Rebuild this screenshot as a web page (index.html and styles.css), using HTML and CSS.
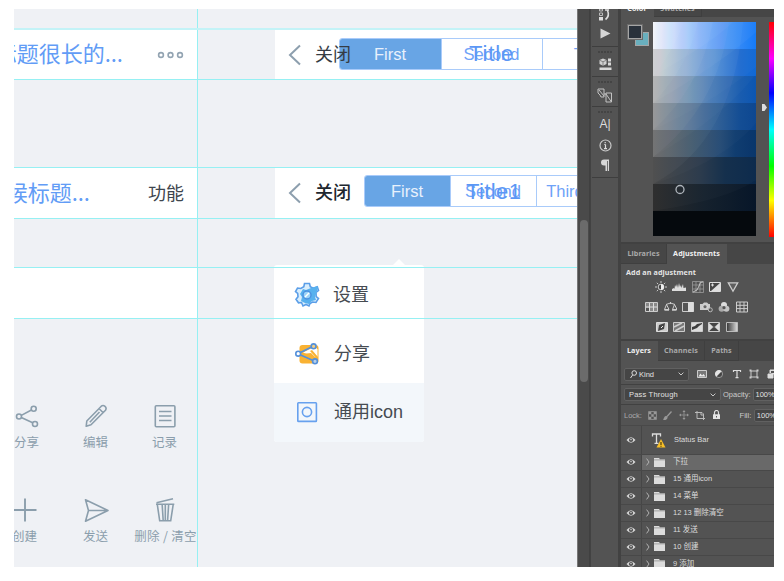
FILE: index.html
```
<!DOCTYPE html>
<html lang="en">
<head>
<meta charset="utf-8">
<title>Design workspace</title>
<link rel="stylesheet" href="styles.css">
</head>
<body>
<svg width="0" height="0" class="defs">
  <defs>
    <symbol id="back" viewBox="0 0 14 22"><path d="M12 1.500 2 11l10 9.500" fill="none" stroke="#8d9fae" stroke-width="2"/></symbol>
    <symbol id="share" viewBox="0 0 24 24"><g fill="none" stroke="currentColor" stroke-width="1.600"><circle cx="4" cy="12.500" r="2.500"/><circle cx="18.700" cy="4.800" r="2.500"/><circle cx="20" cy="20" r="2.500"/><path d="M6.300 11.400 16.400 6M6.300 13.600l11.400 5.200"/></g></symbol>
    <symbol id="eye" viewBox="0 0 10 8"><path d="M.5 4Q5-1.500 9.500 4 5 9.500.5 4Z" fill="#d8d8d8"/><circle cx="5" cy="4" r="2.100" fill="#4e4e4e"/><circle cx="5" cy="3.600" r=".8" fill="#ccc"/></symbol>
    <symbol id="folder" viewBox="0 0 11 9"><path d="M0 0h5l1 1.300h5V9H0Z" fill="#dcdcdc"/><path d="M0 1.900h11" stroke="#777" stroke-width=".6"/></symbol>
    <symbol id="chev" viewBox="0 0 6 4"><path d="m.6.600 2.400 2.400L5.400.600" fill="none" stroke="#c8c8c8"/></symbol>
    <symbol id="twist" viewBox="0 0 4 8"><path d="m.6.600 2.400 3.400L.6 7.400" fill="none" stroke="#bbb" stroke-width=".9"/></symbol>
  </defs>
</svg>
<div class="app">
  <main class="canvas">
    <section class="board bar left-a"><span class="title">标题很长的...</span><svg class="dots" width="28" height="8" fill="none" stroke="#93a4b2" stroke-width="1.600"><circle cx="4" cy="4" r="2.400"/><circle cx="13.500" cy="4" r="2.400"/><circle cx="23" cy="4" r="2.400"/></svg></section>
    <section class="board bar left-b"><span class="title">候标题...</span><span class="action">功能</span></section>
    <section class="board left-c"></section>

    <section class="board bar nav nav-a">
      <svg class="back" width="14" height="22"><use href="#back"/></svg>
      <div class="seg"><span class="on">First</span><span>Second</span><span>Third</span></div>
      <span class="close">关闭</span><span class="over">Title</span>
    </section>
    <section class="board bar nav nav-b">
      <svg class="back" width="14" height="22"><use href="#back"/></svg>
      <div class="seg"><span class="on">First</span><span>Second</span><span class="third">Third</span></div>
      <span class="close">关闭</span><span class="over">Title1</span>
    </section>

    <section class="menu">
      <div class="item">
        <svg width="26" height="26" viewBox="0 0 26 26"><path d="M10.500 1.500h5l.8 3.200 3 1.600 4-1.600 1.200 3.800-2.500 2 .2 4 2.300 2-2.500 4-3.500-.5-2.500 1.500-1 2.500-3-1.500-3 1.500-1.500-3.500-3 .3-2.500-3.500 2-2.500-.3-3.300L1.500 9.500l2-3.500 3.300.500 3-1.800Z" fill="#d9eefc" stroke="#5b9ee8" stroke-width="1.600"/><path d="m9 7 3 1 5-2 7-2-1 5-2 6 1 3-4 1-3 3-4-1-4-2 1-4-2-3Z" fill="#58b1ee"/><circle cx="13" cy="13" r="4" fill="#9bd4f8" stroke="#4a90e0" stroke-width="1.400"/><path d="m11 15 4-4" stroke="#fff" stroke-width="1.500"/></svg>
        <span>设置</span></div>
      <div class="item">
        <svg width="26" height="26" viewBox="0 0 26 26"><rect x="5.500" y="4" width="19" height="18.500" rx="3" fill="#f9b233"/><path d="M9 11.500 18 7h4.500l1 1.500V17Z" fill="#fff"/><path d="m8 13 9-1 6 6v3Zm8-3 2-1 6 7v3Z" fill="#f9b233"/><g fill="#fff" stroke="#5490da" stroke-width="1.600"><path d="M6 11.800 17.500 6M6 13.800l12.500 5.500" fill="none"/><circle cx="4.200" cy="12.700" r="2.400"/><circle cx="19.600" cy="5.300" r="2.400" fill="#f3cf85"/><circle cx="21" cy="20.300" r="2.400" fill="#b8cfe8"/></g></svg>
        <span>分享</span></div>
      <div class="item hover">
        <svg width="26" height="26" viewBox="0 0 26 26" fill="none" stroke="#67a1ee" stroke-width="1.600"><rect x="3.800" y="2.800" width="18.600" height="18.600" rx=".7"/><circle cx="13" cy="12" r="4.600"/></svg>
        <span>通用icon</span></div>
      <svg class="caret" width="14" height="7"><path d="M0 7 7 0l7 7Z" fill="#fff"/></svg>
    </section>

    <section class="icons">
      <div class="cell"><svg width="24" height="24"><use href="#share"/></svg><span>分享</span></div>
      <div class="cell"><svg width="24" height="24" viewBox="0 0 24 24" fill="none" stroke="currentColor" stroke-width="1.600" stroke-linejoin="round"><path d="M2.200 22.300 2.800 17 17.300 2.200q1.800-1.500 3.700.2t.5 3.800L7 20.800Zm13-17.600 4 4M5.800 18.200 15.500 8"/></svg><span>编辑</span></div>
      <div class="cell"><svg width="24" height="24" viewBox="0 0 24 24" fill="none" stroke="currentColor" stroke-width="1.600"><rect x="2.300" y="1.800" width="19.600" height="21" rx="1"/><path d="M6 7.500h12.500M6 12h12.500M6 16.500h12.500"/></svg><span>记录</span></div>
      <div class="cell"><svg class="plus" width="24" height="24" viewBox="0 0 24 24" stroke="currentColor" stroke-width="1.900"><path d="M12 .5v23M.5 12h23"/></svg><span class="create">创建</span></div>
      <div class="cell"><svg width="26" height="24" viewBox="0 0 26 24" fill="none" stroke="currentColor" stroke-width="1.600" stroke-linejoin="round"><path d="M2.500 1.800 25 12.500 2.500 23.200 5.500 12.500ZM5.500 12.500H25"/></svg><span>发送</span></div>
      <div class="cell"><svg width="24" height="24" viewBox="0 0 24 24" fill="none" stroke="currentColor" stroke-width="1.600"><path d="M3 6.300h18.300M3.500 4.800 20 .8M4.300 6.500l2.400 16.300h11L20.200 6.500M9.200 7l1 15.500M12.300 7v15.500M15.600 7l-1 15.500"/></svg><span class="wide">删除 / 清空</span></div>
    </section>

    <i class="guide v"></i>
    <i class="guide g1"></i><i class="guide g2"></i><i class="guide g3"></i><i class="guide g4"></i><i class="guide g5"></i><i class="guide g6"></i>
  </main>

  <div class="gutter"><i class="thumb"></i></div>

  <nav class="rail">
    <div class="group first">
      <svg width="14" height="12" viewBox="0 0 14 12"><path d="M1.500 0h3v2h-3zM1.500 4h3v2.500h-3z" fill="none" stroke="#bbb"/><path d="M1 8h4v3.500H1z" fill="#ddd"/><path d="M7 1h4M7.500 10.500Q12 7 9.500 1.500" fill="none" stroke="#ddd" stroke-width="1.600"/></svg>
      <svg class="play" width="11" height="11" viewBox="0 0 11 11"><path d="M.5.500 10.500 5.500.5 10.500Z" fill="#d6d6d6"/></svg>
    </div>
    <div class="group g30"><i class="grip"></i><svg width="13" height="13" viewBox="0 0 13 13"><path d="m4 .5 3.500 1.500v4L4 7.800.5 6V2Z" fill="#d0d0d0"/><path d="m.8 2.300 3.200 1.500 3.300-1.500M4 3.800v4" stroke="#666" fill="none" stroke-width=".7"/><path d="M9 .5h3v3H9zM9 4.500h3v3H9zM.5 9.500h12V12H.5z" fill="#d8d8d8"/></svg></div>
    <div class="group g30"><i class="grip"></i><svg width="16" height="15" viewBox="0 0 16 15" fill="none" stroke="#c2c2c2"><path d="M1 1h6v8Q3 10 3 7L1 5ZM2 2l5 6M9 5h5.500v9H9Zm0 1 5.500 8M7 6h2"/></svg></div>
    <div class="group g71"><i class="grip"></i><span class="char">A|</span>
      <svg width="13" height="13" viewBox="0 0 13 13"><circle cx="6.500" cy="6.500" r="5.500" fill="none" stroke="#c9c9c9" stroke-width="1.200"/><path d="M6.500 5.500v4M5.300 5.500h1.200M5 9.600h3M6.200 2.900v1.300" stroke="#ddd" stroke-width="1.200"/></svg>
      <svg class="para" width="10" height="12" viewBox="0 0 10 12"><path d="M4 .5h5V12H7.800V2H7v10H5.500V6.500H4a3 3 0 0 1 0-6Z" fill="#d6d6d6"/></svg></div>
  </nav>

  <aside class="panel">
    <div class="tabs color-tabs"><span class="tab on">Color</span><span class="tab">Swatches</span></div>
    <div class="picker">
      <div class="chips"><i class="bg"></i><i class="fg"></i></div>
      <svg class="field" width="103" height="214" viewBox="0 0 103 214">
        <defs>
          <linearGradient id="r1"><stop stop-color="#f2f4f8"/><stop offset=".2" stop-color="#bdd6fb"/><stop offset=".45" stop-color="#74aaf8"/><stop offset=".7" stop-color="#3d8cf4"/><stop offset="1" stop-color="#0573f8"/></linearGradient>
          <linearGradient id="r2"><stop stop-color="#cacacb"/><stop offset=".3" stop-color="#86a9d2"/><stop offset=".55" stop-color="#518cd4"/><stop offset=".85" stop-color="#1365d0"/><stop offset="1" stop-color="#0460d6"/></linearGradient>
          <linearGradient id="r3"><stop stop-color="#a4a4a4"/><stop offset=".3" stop-color="#718fae"/><stop offset=".55" stop-color="#4075b2"/><stop offset=".85" stop-color="#1156ad"/><stop offset="1" stop-color="#0450b0"/></linearGradient>
          <linearGradient id="r4"><stop stop-color="#848484"/><stop offset=".3" stop-color="#597592"/><stop offset=".55" stop-color="#336092"/><stop offset=".85" stop-color="#0b4790"/><stop offset="1" stop-color="#05418d"/></linearGradient>
          <linearGradient id="r5"><stop stop-color="#646464"/><stop offset=".35" stop-color="#405569"/><stop offset=".65" stop-color="#214873"/><stop offset=".8" stop-color="#0c3a6e"/><stop offset="1" stop-color="#053269"/></linearGradient>
          <linearGradient id="r6"><stop stop-color="#444444"/><stop offset=".45" stop-color="#29394a"/><stop offset=".7" stop-color="#112c4a"/><stop offset="1" stop-color="#09274a"/></linearGradient>
          <linearGradient id="r7"><stop stop-color="#2b2b2b"/><stop offset=".5" stop-color="#15212d"/><stop offset="1" stop-color="#071629"/></linearGradient>
        </defs>
        <path fill="url(#r1)" d="M0 0h103v27H0z"/><path fill="url(#r2)" d="M0 27h103v27H0z"/><path fill="url(#r3)" d="M0 54h103v27H0z"/><path fill="url(#r4)" d="M0 81h103v27H0z"/><path fill="url(#r5)" d="M0 108h103v27H0z"/><path fill="url(#r6)" d="M0 135h103v27H0z"/><path fill="url(#r7)" d="M0 162h103v27H0z"/><path fill="#05090d" d="M0 189h103v25H0z"/>
        <g fill="#fff" fill-opacity=".035">
          <path d="M0 0V27Q9 15 13 0Z"/><path d="M0 0V54Q20 30 31 0Z"/><path d="M0 0V81Q35 45 45 0Z"/><path d="M0 0V108Q48 65 60 0Z"/><path d="M0 0V135Q65 85 76 0Z"/><path d="M0 0V162Q80 120 90 0Z"/>
          <path d="M0 54Q60 20 80 0H0Z"/><path d="M0 81Q70 40 103 10V0H0Z"/><path d="M0 108Q60 80 103 45V0H0Z" fill-opacity=".02"/><path d="M0 135Q70 95 103 52V0H0Z" fill-opacity=".02"/><path d="M0 162Q70 140 103 101V0H0Z" fill-opacity=".02"/><path d="M0 189Q75 178 103 158V0H0Z" fill-opacity=".02"/>
        </g>
        <circle cx="27" cy="167.500" r="4" fill="none" stroke="#aeb4bb" stroke-width="1.300"/>
      </svg>
      <svg class="pointer" width="5" height="7" viewBox="0 0 5 7"><path d="M0 0h2.500L5 3.500 2.500 7H0Z" fill="#ddd"/></svg>
      <i class="hue"></i>
    </div>

    <div class="tabs"><span class="tab lib">Libraries</span><span class="tab on adj">Adjustments</span></div>
    <div class="adjust">
      <b>Add an adjustment</b>
      <div class="set">
        <svg width="12" height="12" viewBox="0 0 12 12"><path d="M6 0v2M6 10v2M0 6h2M10 6h2M1.800 1.800l1.400 1.400M8.800 8.800l1.400 1.400M10.200 1.800 8.800 3.200M3.200 8.800l-1.400 1.400" stroke="#c8c8c8"/><circle cx="6" cy="6" r="2.800" fill="#444" stroke="#ccc"/><path d="M6 3a3 3 0 0 1 0 6Z" fill="#eee"/></svg>
        <svg width="14" height="12" viewBox="0 0 14 12"><path d="M0 10V8l2-1 .500 1L3 4l1 2 1-3 1 4 1-5 1 4 1-2 .5 3L11 3l.5 4L14 6.500V10Z" fill="#ddd"/></svg>
        <svg width="12" height="12" viewBox="0 0 12 12" fill="none" stroke="#9b9b9b" stroke-width=".8"><path d="M.5.500h11v11H.5ZM4 .5v11M8 .5v11M.5 4h11M.5 8h11"/><path d="M1 11Q6 10 7 5t4-4" stroke="#ddd"/></svg>
        <svg width="12" height="12" viewBox="0 0 12 12"><path d="M.5 1.500h11v9H.5Z" fill="#444" stroke="#ddd"/><path d="M11 2v8H2Z" fill="#ddd"/><path d="M2 4h3M3.500 2.500v3" stroke="#ddd"/></svg>
        <svg width="12" height="12" viewBox="0 0 12 12"><path d="M1.300 1.800h9.400L6 10.200Z" fill="#5f5f5f" stroke="#ccc" stroke-width="1.300"/></svg>
      </div>
      <div class="set">
        <svg width="13" height="12" viewBox="0 0 13 12"><path d="M.5 1.500h12v9H.5Z" fill="#888" stroke="#ccc"/><path d="M1 6h11M4.500 2v8M8.500 2v8" stroke="#ddd"/><path d="M1 7h3v3H1z" fill="#555"/></svg>
        <svg width="13" height="12" viewBox="0 0 13 12" fill="none" stroke="#ccc"><path d="M6.500 1v2M2 3.500 6.500 2 11 3.500M2.500 3.500l-2 5h4.500ZM10.500 3.500l-2 5h4.500Z"/><path d="M.5 9h4.500M8 9h4.500" stroke-width="1.600"/></svg>
        <svg width="12" height="12" viewBox="0 0 12 12"><path d="M.5 1.500h11v9H.5Z" fill="#555" stroke="#ccc"/><path d="M6 1h5.500v10H6z" fill="#ddd"/></svg>
        <svg width="13" height="12" viewBox="0 0 13 12"><path d="M0 3h2.500L4 1.500h3L8.500 3H10v6H0Z" fill="#ccc"/><circle cx="5" cy="5.800" r="2" fill="#666" stroke="#eee" stroke-width=".6"/><circle cx="10.300" cy="8.800" r="2" fill="#555" stroke="#bbb"/></svg>
        <svg width="12" height="12" viewBox="0 0 12 12"><circle cx="6" cy="4" r="3" fill="#ddd"/><circle cx="3.600" cy="7.800" r="3" fill="#aaa"/><circle cx="8.400" cy="7.800" r="3" fill="#c4c4c4"/><circle cx="6" cy="6.700" r="1.600" fill="#555"/></svg>
        <svg width="12" height="12" viewBox="0 0 12 12" fill="none" stroke="#ccc"><path d="M.5 1h11v10H.5ZM4 1v10M8 1v10M.5 4.300h11M.5 7.600h11"/></svg>
      </div>
      <div class="set">
        <svg width="12" height="12" viewBox="0 0 12 12"><path d="M.5 1.500h11v9H.5Z" fill="#ccc" stroke="#ddd"/><path d="m2 10 1-6 6-2-1 6Z" fill="#444"/><path d="m5 7 2-2" stroke="#eee"/></svg>
        <svg width="12" height="12" viewBox="0 0 12 12"><path d="M.5 1.500h11v9H.5Z" fill="#777" stroke="#ccc"/><path d="m1 6 8-4M2 10l9-5" stroke="#ccc" stroke-width="1.600"/></svg>
        <svg width="12" height="12" viewBox="0 0 12 12"><path d="M.5 1.500h11v9H.5Z" fill="#ddd" stroke="#ccc"/><path d="m1 6 3-1 2-2 5-1v1L8 5 6 7 1 9Z" fill="#3e3e3e"/></svg>
        <svg width="12" height="12" viewBox="0 0 12 12"><path d="M.5 1.500h11v9H.5Z" fill="#888" stroke="#ccc"/><path d="m1 2 5 4 5-4ZM1 10l5-4 5 4Z" fill="#444"/><path d="m1 2 4 4-4 4Zm10 0L7 6l4 4Z" fill="#ddd"/></svg>
        <svg width="12" height="12" viewBox="0 0 12 12"><defs><linearGradient id="gm"><stop stop-color="#333"/><stop offset="1" stop-color="#ddd"/></linearGradient></defs><path d="M.5 1.500h11v9H.5Z" fill="url(#gm)" stroke="#bbb"/></svg>
      </div>
    </div>

    <div class="tabs layer-tabs"><span class="tab on lay">Layers</span><span class="tab cha">Channels</span><span class="tab pat">Paths</span></div>
    <div class="row filter">
      <span class="field-box kind"><svg width="7" height="9" viewBox="0 0 7 9"><circle cx="4.200" cy="3" r="2.300" fill="none" stroke="#ddd"/><path d="M2.600 5 .5 8" stroke="#ddd"/></svg>Kind<svg class="end" width="6" height="4"><use href="#chev"/></svg></span>
      <svg width="10" height="10" viewBox="0 0 10 10"><path d="M.5 1.500h9v7h-9Z" fill="#777" stroke="#ccc"/><path d="m1.500 7.500 2-3 1.500 2L6.500 5l2 2.500Z" fill="#eee"/></svg>
      <svg width="10" height="10" viewBox="0 0 10 10"><circle cx="5" cy="5" r="3.600" fill="#444" stroke="#ccc" stroke-width=".6"/><path d="M2.300 7.700A3.800 3.800 0 0 1 7.700 2.300Z" fill="#e4e4e4"/></svg>
      <svg width="10" height="10" viewBox="0 0 10 10"><path d="M1.500 3V1.500h7V3M5 1.500v7M3.500 8.700h3" fill="none" stroke="#ddd" stroke-width="1.200"/></svg>
      <svg width="10" height="10" viewBox="0 0 10 10" fill="none" stroke="#ccc"><path d="M2 2h6v6H2Z"/><path d="M.5 1.500h2M7.500 1.500h2M.5 8.500h2M7.500 8.500h2" stroke-width="2"/></svg>
      <svg width="10" height="10" viewBox="0 0 10 10"><path d="M3 4V1h5v5M1 5h5v4H1Z" fill="#ddd" stroke="#ddd"/><path d="M4 2h3v2H4z" fill="#555"/></svg>
    </div>
    <div class="row blend"><span class="field-box mode">Pass Through<svg class="end" width="6" height="4"><use href="#chev"/></svg></span><span class="lab">Opacity:</span><span class="field-box num">100%</span></div>
    <div class="row lock"><span class="dim">Lock:</span>
      <svg width="9" height="9" viewBox="0 0 9 9"><path d="M.5.500h8v8h-8Z" fill="none" stroke="#888"/><path d="M1 1h2.300v2.300H1zM5.700 1H8v2.300H5.700zM3.300 3.300h2.400v2.400H3.300zM1 5.700h2.300V8H1zM5.700 5.700H8V8H5.700z" fill="#999"/></svg>
      <svg width="9" height="9" viewBox="0 0 9 9"><path d="m8.500.500-4.500 5M3.800 5.500Q2 5.500 1 8.500q3 0 3-2.500" stroke="#999" stroke-width="1.300" fill="#999"/></svg>
      <svg width="10" height="10" viewBox="0 0 10 10"><path d="M5 1v8M1 5h8" stroke="#888"/><path d="m5 0 1.500 2h-3ZM5 10l1.500-2h-3ZM0 5l2-1.500v3ZM10 5 8 3.500v3Z" fill="#999"/></svg>
      <svg width="10" height="9" viewBox="0 0 10 9"><path d="M0 1.500h7L8.500 3v6M2 0v7.500h8M6 1.500V4h2.500" fill="none" stroke="#bbb"/></svg>
      <svg width="9" height="10" viewBox="0 0 9 10"><path d="M2.500 5V2.500a2 2 0 0 1 4 0V5" fill="none" stroke="#ddd" stroke-width="1.200"/><path d="M1 4.300h7V9H1z" fill="#e4e4e4"/><path d="M4.500 6v1.500" stroke="#555"/></svg>
      <span class="lab fill">Fill:</span><span class="field-box num">100%</span></div>
    <div class="layers">
      <div class="layer text"><span class="vis"><svg width="10" height="8"><use href="#eye"/></svg></span><svg class="type" width="15" height="17" viewBox="0 0 15 17"><path d="M1.500 4.500V2h8v2.500M5.500 2v9M3.500 11.400h4" fill="none" stroke="#ddd" stroke-width="1.300"/><path d="m10 7 4.500 8.500h-9Z" fill="#f8bf27"/><path d="M10 10v3M10 13.700v1" stroke="#40330b" stroke-width="1.100"/></svg><span>Status Bar</span></div>
      <div class="layer sel"><span class="vis"><svg width="10" height="8"><use href="#eye"/></svg></span><svg class="tw" width="4" height="8"><use href="#twist"/></svg><svg width="11" height="9"><use href="#folder"/></svg><span>下拉</span></div>
      <div class="layer"><span class="vis"><svg width="10" height="8"><use href="#eye"/></svg></span><svg class="tw" width="4" height="8"><use href="#twist"/></svg><svg width="11" height="9"><use href="#folder"/></svg><span>15 通用icon</span></div>
      <div class="layer"><span class="vis"><svg width="10" height="8"><use href="#eye"/></svg></span><svg class="tw" width="4" height="8"><use href="#twist"/></svg><svg width="11" height="9"><use href="#folder"/></svg><span>14 菜单</span></div>
      <div class="layer"><span class="vis"><svg width="10" height="8"><use href="#eye"/></svg></span><svg class="tw" width="4" height="8"><use href="#twist"/></svg><svg width="11" height="9"><use href="#folder"/></svg><span>12 13 删除清空</span></div>
      <div class="layer"><span class="vis"><svg width="10" height="8"><use href="#eye"/></svg></span><svg class="tw" width="4" height="8"><use href="#twist"/></svg><svg width="11" height="9"><use href="#folder"/></svg><span>11 发送</span></div>
      <div class="layer"><span class="vis"><svg width="10" height="8"><use href="#eye"/></svg></span><svg class="tw" width="4" height="8"><use href="#twist"/></svg><svg width="11" height="9"><use href="#folder"/></svg><span>10 创建</span></div>
      <div class="layer"><span class="vis"><svg width="10" height="8"><use href="#eye"/></svg></span><svg class="tw" width="4" height="8"><use href="#twist"/></svg><svg width="11" height="9"><use href="#folder"/></svg><span>9 添加</span></div>
    </div>
  </aside>
</div>
</body>
</html>
```
FILE: styles.css
```
* { box-sizing: border-box; }
body { margin: 0; padding: 9px 10px 14px 14px; background: #fff; font-family: "Liberation Sans", "Noto Sans CJK SC", sans-serif; overflow: hidden; }
svg { display: block; flex: none; }
i { display: block; }
.defs { position: absolute; }
.app { width: 760px; height: 558px; display: flex; overflow: hidden; }

/* Artboards on the free canvas */
.canvas { position: relative; width: 563px; flex: none; background: #eff1f5; overflow: hidden; }
.board { position: absolute; background: #fff; }
.bar { display: flex; align-items: center; white-space: nowrap; }
.left-a { left: 0; top: 21px; width: 183px; height: 49px; justify-content: flex-end; padding-right: 12px; }
.left-b { left: 0; top: 159px; width: 183px; height: 50px; justify-content: flex-end; padding-right: 13px; }
.left-c { left: 0; top: 258px; width: 183px; height: 51px; }
.title { font: 22px/30px "Noto Sans CJK SC", sans-serif; color: #629cf6; margin-bottom: 5px; }
.left-a .title { margin-right: 34px; }
.left-b .title { margin-right: 58px; }
.action { font: 18px/26px "Noto Sans CJK SC", sans-serif; color: #3e454d; margin-bottom: 3px; }
.nav { left: 261px; width: 330px; padding-left: 13px; }
.nav-a { top: 21px; height: 49px; }
.nav-b { top: 159px; height: 50px; }
.close { position: absolute; left: 40px; top: 10px; font: 18px/26px "Noto Sans CJK SC", sans-serif; color: #353c44; }
.nav-b .close { font-weight: 500; color: #20272f; }
.over { position: absolute; left: 194px; top: 10px; font-size: 22px; line-height: 28px; letter-spacing: .9px; color: #5b97f5; }
.nav-b .over { left: 191px; letter-spacing: .4px; }
.seg { display: flex; flex: none; height: 32px; border: 1px solid #a9cbfa; border-radius: 3px; overflow: hidden; margin-left: 37px; margin-top: -2px; font-size: 16.500px; line-height: 31px; color: #6ea2f8; }
.seg span { width: 101px; text-align: center; border-right: 1px solid #a9cbfa; padding-right: 1px; }
.seg .on { width: 102px; background: #68a5e5; color: #e8f1fc; }
.nav-b .seg { margin-left: 62px; margin-top: -4px; }
.nav-b .seg span { width: 86px; }
.nav-b .seg .third { width: 58px; }

.menu { position: absolute; left: 260px; top: 256px; width: 150px; height: 177px; background: #fff; border-radius: 3px; }
.item { height: 59px; display: flex; align-items: center; gap: 14px; padding-left: 20px; font: 18px/26px "Liberation Sans", "Noto Sans CJK SC", sans-serif; color: #464b51; }
.item:first-child span { margin-left: -1px; }
.hover { background: #f3f7fb; border-radius: 0 0 3px 3px; }
.hover span { margin-top: -2px; }
.caret { position: absolute; left: 118px; top: -6px; }

.icons { position: absolute; left: -22px; top: 395px; display: grid; grid-template-columns: repeat(3, 69px); grid-auto-rows: 94px; }
.cell { display: flex; flex-direction: column; align-items: center; gap: 4px; color: #8b9eac; white-space: nowrap; font: 12.500px/20px "Noto Sans CJK SC", sans-serif; }
.cell .plus { margin-left: -4px; }
.create { margin-left: -4px; }
.wide { margin-left: 2px; letter-spacing: .3px; }

.guide { position: absolute; left: 0; right: 0; height: 1px; background: #96f0f3; }
.guide.v { left: 183px; right: auto; top: 0; bottom: 0; width: 1px; height: auto; }
.g1 { top: 19px; height: 2px; background: #c3f3f7; }
.g2 { top: 70px; }
.g3 { top: 158px; }
.g4 { top: 209px; }
.g5 { top: 258px; }
.g6 { top: 309px; }

.gutter { width: 13px; flex: none; background: #4a4a4a; border-left: 1px solid #777; border-right: 1px solid #404040; padding: 211px 2px 0; }
.thumb { width: 8px; height: 162px; border-radius: 4px; background: #6b6b6b; }

/* Collapsed panel rail */
.rail { width: 31px; flex: none; background: #535353; border-left: 1px solid #424242; border-right: 3px solid #424242; padding-left: 1px; }
.group { border-bottom: 1px solid #3e3e3e; display: flex; flex-direction: column; align-items: center; }
.first { height: 38px; }
.play { margin: 7px 0 0 1px; }
.g30 { height: 30px; }
.g30 svg { margin-top: -1px; }
.g71 { height: 71px; }
.grip { width: 14px; height: 2px; margin: 4px 0 6px; background: repeating-linear-gradient(90deg, #444 0 2px, #535353 2px 3px); }
.g71 .grip { margin-bottom: 4px; }
.char { font-size: 12px; line-height: 14px; color: #ddd; margin-bottom: 8px; }
.para { margin-top: 7px; }

/* Docked panels */
.panel { flex: 1; min-width: 0; background: #535353; overflow: hidden; color: #dcdcdc; font-size: 7.500px; }
.tabs { height: 20px; display: flex; background: #464646; font: bold 7.200px/19px "Noto Sans", sans-serif; letter-spacing: .1px; }
.tab { flex: none; border-right: 1px solid #3f3f3f; border-bottom: 1px solid #3f3f3f; text-align: center; color: #a9a9a9; }
.tab.on { background: #535353; border-color: transparent; color: #f0f0f0; }
.color-tabs { height: 8px; overflow: hidden; }
.color-tabs .tab { width: 48px; height: 9px; line-height: 0; margin-top: -1px; }
.color-tabs .on { width: 33px; }
.lib { width: 46px; }
.adj { width: 60px; }
.lay { width: 37px; }
.cha { width: 47px; }
.pat { width: 34px; }

.picker { height: 227px; display: flex; border-bottom: 2px solid #414141; padding-top: 5px; }
.chips { position: relative; width: 32px; flex: none; }
.bg, .fg { position: absolute; width: 14px; height: 14px; border: 1px solid #a5a5a5; }
.bg { left: 14px; top: 10px; background: #69afbe; }
.fg { left: 7px; top: 3px; background: #29313b; outline: 1px solid #6b6b6b; }
.pointer { margin: 82px 5px 0 6px; }
.hue { flex: none; width: 5px; margin-left: -3px; height: 215px; background: linear-gradient(#f00, #f0f 17%, #00f 33%, #0ff 50%, #0f0 67%, #ff0 83%, #f00); }

.adjust { height: 77px; border-bottom: 2px solid #414141; padding: 2px 7px 0 5px; }
.adjust b { display: block; font: bold 7.200px/12px "Noto Sans", sans-serif; letter-spacing: .1px; color: #e4e4e4; }
.set { display: flex; justify-content: center; gap: 5.500px; height: 12px; margin: 3px 0 8px; }

.row { display: flex; align-items: center; white-space: nowrap; border-bottom: 1px solid #414141; padding-left: 3px; }
.field-box { display: flex; align-items: center; flex: none; height: 13px; background: #454545; border: 1px solid #616161; border-radius: 2px; padding: 0 4px; color: #e2e2e2; }
.end { margin-left: auto; }
.filter { height: 24px; gap: 7.500px; padding-top: 3px; }
.kind { width: 65px; gap: 2px; padding-left: 5px; }
.blend { height: 20px; }
.mode { width: 97px; letter-spacing: .2px; }
.lab { margin: 0 2px 0 2px; color: #ccc; width: 29px; }
.num { width: 40px; padding: 0 2px; }
.lock { height: 20px; gap: 6.600px; border: 0; padding-left: 3px; }
.dim { color: #aaa; width: 17px; }
.lock .fill { margin: 0 -4px 0 12px; width: 13px; }
.layers { border-top: 1px solid #494949; font: 7.500px/12px "Liberation Sans", "Noto Sans CJK SC", sans-serif; }
.layer { height: 16.900px; display: flex; align-items: center; border-bottom: 1px solid #484848; white-space: nowrap; }
.layer.text { height: 28.500px; }
.vis { width: 21px; align-self: stretch; display: flex; align-items: center; justify-content: center; border-right: 1px solid #464646; flex: none; margin-right: 4px; }
.tw { margin-right: 4px; }
.layer > span:last-child { margin-left: 8px; }
.type { margin: 2px 0 0 5px; }
.sel { background: linear-gradient(90deg, #535353 21px, #696969 21px); }
```
